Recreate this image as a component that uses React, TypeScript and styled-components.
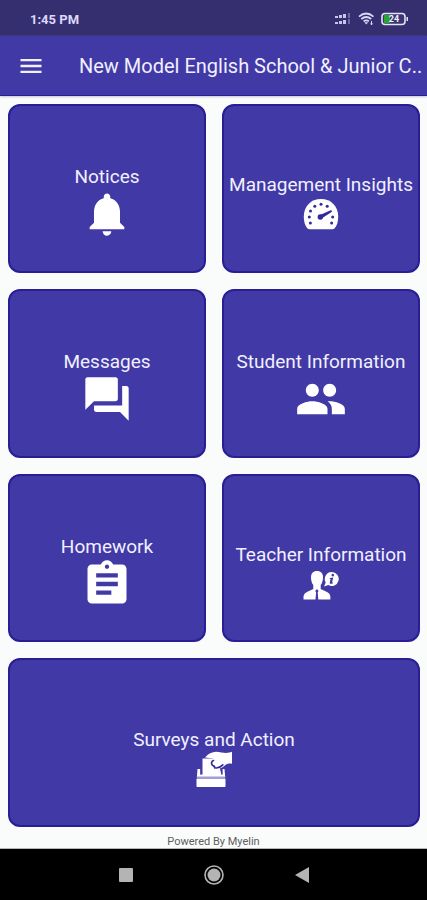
import React from "react";
import styled, { createGlobalStyle } from "styled-components";
import {
  MdAssignment,
  MdForum,
  MdMenu,
  MdNotifications,
  MdPeople,
} from "react-icons/md";

const GlobalStyle = createGlobalStyle`
  *, *::before, *::after { box-sizing: border-box; }
  body { margin: 0; background: #fafcfc; font-family: Roboto, "Liberation Sans", sans-serif; }
  button { font: inherit; color: inherit; border: 0; padding: 0; background: none; cursor: pointer; }
  svg { display: block; flex: none; }
`;

const Screen = styled.div`
  display: flex;
  flex-direction: column;
  min-height: 100vh;
`;

const StatusBar = styled.div`
  display: flex;
  align-items: center;
  justify-content: space-between;
  height: 36px;
  padding: 2px 18px 0 30px;
  background: #352f70;
  color: #dcd9fa;
`;

const Clock = styled.span`
  font-size: 13px;
  font-weight: 700;
`;

const StatusIcons = styled.div`
  display: flex;
  align-items: center;
  gap: 6px;
`;

const AppBar = styled.header`
  display: flex;
  align-items: center;
  gap: 34px;
  height: 60px;
  padding: 0 4px 0 17px;
  background: #4139a6;
  border-bottom: 1px solid #2a1d96;
  box-shadow: 0 1px 2px #c4c4d4;
  color: #f1f0ff;
`;

const MenuButton = styled.button`
  display: flex;
`;

const Title = styled.h1`
  margin: 0;
  font-size: 20px;
  line-height: 24px;
  font-weight: 400;
  white-space: nowrap;
`;

const Grid = styled.main`
  flex: 1;
  display: grid;
  grid-template-columns: repeat(2, minmax(0, 1fr));
  grid-auto-rows: minmax(128px, 1fr);
  gap: 16px;
  padding: 8px 7px 0 8px;
`;

const Card = styled.button<{ $wide?: boolean }>`
  grid-column: ${(p) => (p.$wide ? "1 / -1" : "auto")};
  display: flex;
  flex-direction: column;
  align-items: center;
  justify-content: center;
  padding-top: 30px;
  border: 2px solid #291e94;
  border-radius: 12px;
  background: #4139a6;
  color: #ffffff;
`;

const CardLabel = styled.span`
  font-size: 19px;
  line-height: 22px;
  color: #f1f0ff;
  white-space: nowrap;
`;

const Footer = styled.footer`
  height: 22px;
  padding-top: 8px;
  border-bottom: 1px solid #b8b8b8;
  font-size: 11px;
  line-height: 14px;
  text-align: center;
  color: #5c5c5c;
`;

const NavBar = styled.nav`
  display: flex;
  align-items: center;
  justify-content: center;
  gap: 71px;
  height: 51px;
  background: #000000;
  color: #b4b4b4;
`;

const NavButton = styled.button`
  display: flex;
`;

const SignalIcon = () => (
  <svg width="18" height="14" viewBox="0 0 18 14" fill="#c9c5ea">
    <path d="M1 4h3v2H1zM5 3h3v3H5zM9 2h3v4H9zM1 10h3v2H1zM5 9h3v3H5zM9 8h3v4H9z" />
    <path d="M14 1h2v5h-2zM14 7h2v5h-2z" opacity=".4" />
  </svg>
);

const WifiIcon = () => (
  <svg width="17" height="14" viewBox="0 0 17 14" fill="none" stroke="#dcd9fa" strokeWidth="1.7">
    <path d="M1 4.6Q8 -1.6 15.500 4.600M3.300 7Q8.200 3 13.200 7M5.600 9.300Q8.200 7.300 10.900 9.300" />
    <path d="M6.300 10.300h3.900L8.250 12.600z" fill="#dcd9fa" stroke="none" />
    <path d="M13.500 9v4M12.300 11.500l1.200 1.300 1.200-1.300" strokeWidth="1" />
  </svg>
);

const BatteryIcon = () => (
  <svg width="28" height="14" viewBox="0 0 28 14">
    <rect x="1" y="1.500" width="23" height="11" rx="3" fill="#3a3670" stroke="#e4e2f6" strokeWidth="1.600" />
    <path d="M3 3h6v8H3z" fill="#2ba52b" />
    <path d="M25.500 5H27v4h-1.500z" fill="#e4e2f6" />
    <text x="13" y="10.300" textAnchor="middle" fontSize="9" fontWeight="700" fill="#f1f0ff">24</text>
  </svg>
);

const GaugeIcon = () => (
  <svg width="36" height="36" viewBox="0 0 36 36">
    <path d="M4.500 32.500C2.200 30 .8 26 .8 20.500 .8 10.400 8 3 18 3s17.200 7.400 17.200 17.500c0 5.500-1.400 9.500-3.700 12-.6.600-1.300.7-2.200.7H6.700c-.9 0-1.600-.1-2.200-.7z" fill="currentColor" />
    <g fill="#322a99">
      <circle cx="6.300" cy="21" r="1.500" />
      <circle cx="7.400" cy="27" r="1.500" />
      <circle cx="7.500" cy="15" r="1.500" />
      <circle cx="11.800" cy="10.200" r="1.500" />
      <circle cx="18" cy="8.300" r="1.500" />
      <circle cx="24.200" cy="10.200" r="1.500" />
      <circle cx="29.700" cy="21" r="1.500" />
      <circle cx="28.600" cy="27" r="1.500" />
      <circle cx="17.300" cy="21" r="2.700" />
      <path d="M16.400 19.300 28.300 14.100l.7 1.600-10.800 7z" />
    </g>
  </svg>
);

const TeacherIcon = () => (
  <svg width="36" height="36" viewBox="0 0 36 36" fill="currentColor">
    <path d="M14 5c4 0 6 2.500 6 6.200 0 3.200-.7 5.800-2.300 7.700v4l6.300 3c2.300 1.100 3.200 2.500 3.400 5v2.600H15.300l-.6-7 .8-1.500-1-1.400h-1.200l-1 1.400.8 1.500-.6 7H.5v-2.600c.2-2.500 1.100-3.900 3.400-5l6.400-3v-4C8.700 17 8 14.400 8 11.200 8 7.500 10 5 14 5z" />
    <path d="M28.800 6a7 7 0 1 1-3.500 13.100L21 20.500l1.700-4A7 7 0 0 1 28.800 6z" />
    <path d="M29.900 7.800a1.300 1.300 0 1 1-.2 2.600 1.300 1.300 0 0 1 .2-2.600zM27 12l3.300-.4-1.300 5 1-.3-.3 1.100c-1.500.7-3.300.8-2.900-1l.8-3.300-.9-.1z" fill="#4139a6" />
  </svg>
);

const BallotIcon = () => (
  <svg width="36" height="36" viewBox="0 0 36 36" fill="currentColor">
    <path d="M6.500 7.500H21l2.500 8 2 9H6.500z" />
    <path d="M9 6.500C12 3 16 1 20 .8c4 .2 7 1.200 10 1.200 2.500 0 4-.6 6-1.200v12c-2-.6-4.500-.4-6 .6-2 1.500-4 3.500-7 4L17 7.500z" />
    <path d="M17.500 9.500c-2.300.8-2.600 3.600-.8 4.900 1.200.8 2.300.7 2 2.500M20 17c3 .2 5-1.400 6.800-3.200" fill="none" stroke="#30279a" strokeWidth="1.700" strokeLinecap="round" />
    <path d="M1.500 18h3v5.500h21.800V18h2.200l.7 8H.9z" />
    <path d="M4.800 17.500v6M26 17.500v6" stroke="#4139a6" strokeWidth="1" />
    <path d="M.5 28h29v7c0 .6-.4 1-1 1h-27c-.6 0-1-.4-1-1z" />
    <path d="M.8 25.500h28.500V28H.8z" fill="#a19dd8" />
  </svg>
);

const RecentsIcon = () => (
  <svg width="14" height="14" viewBox="0 0 14 14" fill="currentColor">
    <rect width="14" height="14" rx="1" />
  </svg>
);

const HomeIcon = () => (
  <svg width="20" height="20" viewBox="0 0 20 20">
    <circle cx="10" cy="10" r="9" fill="none" stroke="currentColor" strokeWidth="1.600" />
    <circle cx="10" cy="10" r="6.500" fill="currentColor" />
  </svg>
);

const BackIcon = () => (
  <svg width="14" height="16" viewBox="0 0 14 16" fill="currentColor">
    <path d="M0 8 14 0v16z" />
  </svg>
);

const cards = [
  { label: "Notices", icon: <MdNotifications size={52} /> },
  { label: "Management Insights", icon: <GaugeIcon /> },
  { label: "Messages", icon: <MdForum size={52} /> },
  { label: "Student Information", icon: <MdPeople size={52} /> },
  { label: "Homework", icon: <MdAssignment size={52} /> },
  { label: "Teacher Information", icon: <TeacherIcon /> },
  { label: "Surveys and Action", icon: <BallotIcon />, wide: true },
];

export default function App() {
  return (
    <Screen>
      <GlobalStyle />
      <StatusBar>
        <Clock>1:45 PM</Clock>
        <StatusIcons>
          <SignalIcon />
          <WifiIcon />
          <BatteryIcon />
        </StatusIcons>
      </StatusBar>
      <AppBar>
        <MenuButton aria-label="Open menu">
          <MdMenu size={28} />
        </MenuButton>
        <Title>New Model English School &amp; Junior C..</Title>
      </AppBar>
      <Grid>
        {cards.map((card) => (
          <Card key={card.label} $wide={card.wide}>
            <CardLabel>{card.label}</CardLabel>
            {card.icon}
          </Card>
        ))}
      </Grid>
      <Footer>Powered By Myelin</Footer>
      <NavBar aria-label="System navigation">
        <NavButton aria-label="Recent apps"><RecentsIcon /></NavButton>
        <NavButton aria-label="Home"><HomeIcon /></NavButton>
        <NavButton aria-label="Back"><BackIcon /></NavButton>
      </NavBar>
    </Screen>
  );
}
